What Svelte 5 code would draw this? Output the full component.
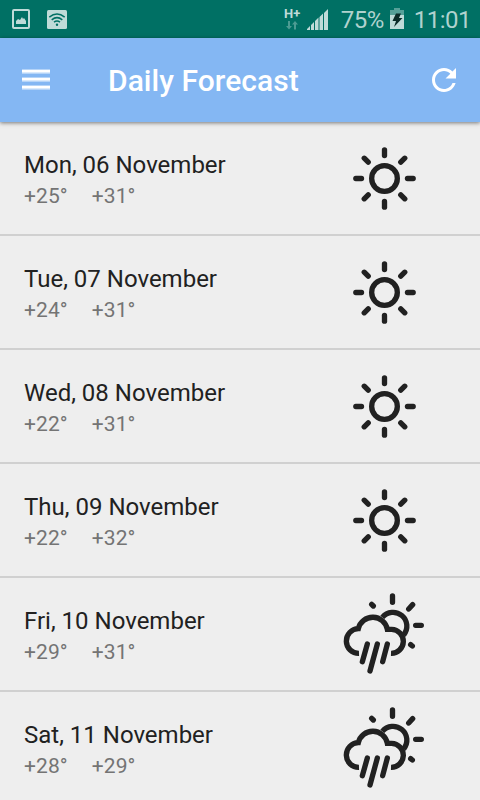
<script>
  const days = [
    { date: 'Mon, 06 November', low: '+25°', high: '+31°', icon: 'sun' },
    { date: 'Tue, 07 November', low: '+24°', high: '+31°', icon: 'sun' },
    { date: 'Wed, 08 November', low: '+22°', high: '+31°', icon: 'sun' },
    { date: 'Thu, 09 November', low: '+22°', high: '+32°', icon: 'sun' },
    { date: 'Fri, 10 November', low: '+29°', high: '+31°', icon: 'rain' },
    { date: 'Sat, 11 November', low: '+28°', high: '+29°', icon: 'rain' },
  ];

  // sun rays, one every 45 degrees
  const rays = [0, 45, 90, 135, 180, 225, 270, 315];
</script>

<div class="screen">
  <div class="status">
    <svg class="picture" width="18" height="20" viewBox="0 0 18 20">
      <rect x="1" y="1" width="16" height="18" rx="1" fill="none" stroke="currentColor" stroke-width="2" />
      <path d="M4 15v-3l2-2 2 1 2-3 1 2 1-1 2 3v3z" fill="currentColor" />
    </svg>
    <svg class="wifi" width="20" height="19" viewBox="0 0 20 19">
      <rect width="20" height="19" rx="1.5" fill="currentColor" />
      <g fill="none" stroke="#007064" stroke-width="1.5">
        <path d="M2.3 7.2q7.7-6.2 15.4 0" />
        <path d="M4.7 9.8q5.3-4.4 10.6 0" />
        <path d="M7 12.2q3-2.4 6 0" />
      </g>
      <circle cx="10" cy="14.8" r="1.2" fill="#007064" />
    </svg>
    <div class="network">
      <span>H+</span>
      <svg width="12" height="9" viewBox="0 0 12 9" fill="currentColor">
        <path d="M2 0h2v5h2L3 8.500 0 5h2zM8 8.500h2v-5h2L9 0 6 3.500h2z" />
      </svg>
    </div>
    <svg class="signal" width="21" height="21" viewBox="0 0 21 21" fill="currentColor">
      <path d="M0 21v-1l3-3v4zM4 21v-5l3-3v8zM8 21v-9l3.500-3.500V21zM12.500 21V8L16 4.500V21zM17 21V4l4-4v21z" />
    </svg>
    <span class="percent">75%</span>
    <svg class="battery" width="14" height="21" viewBox="0 0 14 21">
      <path d="M4 0h6v2h4v6H0V2h4z" fill="currentColor" opacity=".45" />
      <path d="M0 7h14v14H0z" fill="currentColor" />
      <path d="M6 5.500h5L9 10h3.500L4 19l2-6H2.500z" fill="#0b2b28" />
    </svg>
    <span class="time">11:01</span>
  </div>

  <header>
    <svg class="menu" width="28" height="22" viewBox="0 0 28 22" fill="#fff">
      <path d="M0 0h28v5H0zM0 8h28v5H0zM0 16h28v5H0z" opacity=".4" />
      <path d="M0 1h28v2.500H0zM0 9h28v2.500H0zM0 17h28v2.500H0z" />
    </svg>
    <h1>Daily Forecast</h1>
    <svg class="refresh" width="36" height="36" viewBox="0 0 24 24" fill="#fff">
      <path d="M17.650 6.350C16.200 4.900 14.210 4 12 4c-4.420 0-7.990 3.580-7.990 8s3.570 8 7.990 8c3.730 0 6.840-2.550 7.730-6h-2.080c-.82 2.330-3.040 4-5.650 4-3.310 0-6-2.690-6-6s2.690-6 6-6c1.660 0 3.140.69 4.220 1.780L13 11h7V4l-2.350 2.350z" />
    </svg>
  </header>

  <ul>
    {#each days as day}
      <li>
        <div class="info">
          <span class="date">{day.date}</span>
          <span class="temps"><span>{day.low}</span><span>{day.high}</span></span>
        </div>
        <svg class="weather" width="100" height="112" viewBox="0 -21 300 336">
          {#if day.icon === 'sun'}
            <circle cx="148.500" cy="148.500" r="38.500" />
            {#each rays as angle}
              <path d="M148.500 79.500v-17" transform="rotate({angle} 148.500 148.500)" />
            {/each}
          {:else}
            <path class="flat" d="M142 97a39.500 39.500 0 0 1 64 53" />
            <path class="flat" d="M72 205A37 37 0 0 1 70 131A44.500 44.500 0 0 1 157 133H170A36 36 0 0 1 168 205" />
            <path d="M172.500 33v19M221 72l12-13M242 121h17M227 179l5 4M110 58l5 5" />
            <path d="M97 177L82 230M127 177l-22 81M157 177l-14 53" />
          {/if}
        </svg>
      </li>
    {/each}
  </ul>
</div>

<style>
  :global(body) {
    margin: 0;
    background: #eee;
  }

  .screen {
    height: 800px;
    overflow: hidden;
    background: #eee;
    font-family: Roboto, sans-serif;
  }

  .status {
    display: flex;
    align-items: center;
    box-sizing: border-box;
    height: 38px;
    padding: 0 10px 0 12px;
    background: #007064;
    color: #bfdbd8;
  }

  .status svg {
    flex: none;
  }

  .wifi {
    margin-left: 17px;
  }

  .network {
    display: flex;
    flex-direction: column;
    align-items: center;
    width: 17px;
    margin: 0 0 2px auto;
    font-size: 13px;
    font-weight: 700;
    line-height: 13px;
  }

  .network svg {
    margin-top: 1px;
    opacity: 0.4;
  }

  .signal {
    margin-left: 6px;
  }

  .percent,
  .time {
    font-size: 24px;
    line-height: 38px;
    padding-top: 2px;
    opacity: 0.92;
  }

  .percent {
    margin-left: 13px;
    letter-spacing: -0.5px;
  }

  .battery {
    margin: 0 10px 2px 6px;
  }

  .time {
    margin-right: -1px;
    letter-spacing: -0.5px;
  }

  header {
    position: relative;
    display: flex;
    align-items: center;
    box-sizing: border-box;
    height: 84px;
    padding: 0 18px 0 22px;
    background: #84b7f3;
    box-shadow: 0 1px 4px rgba(0, 0, 0, 0.5);
  }

  h1 {
    flex: 1;
    margin: 0 0 0 58px;
    color: #fff;
    font-size: 30px;
    font-weight: 500;
    letter-spacing: 0.05px;
    line-height: 36px;
    padding-top: 1px;
  }

  ul {
    margin: 0;
    padding: 0;
    list-style: none;
  }

  li {
    display: flex;
    justify-content: space-between;
    height: 112px;
    padding: 0 45px 0 24px;
    border-bottom: 2px solid #d0d0d0;
  }

  .info {
    display: flex;
    flex-direction: column;
    padding-top: 28px;
  }

  .date {
    color: #212121;
    font-size: 24px;
    line-height: 30px;
  }

  .temps {
    display: flex;
    gap: 24px;
    margin-top: 3px;
    color: #747474;
    font-size: 21px;
    letter-spacing: 0.1px;
    line-height: 26px;
  }

  .weather {
    fill: none;
    stroke: #212121;
    stroke-width: 16;
    stroke-linecap: round;
    stroke-linejoin: miter;
  }

  .weather .flat {
    stroke-linecap: butt;
  }
</style>
